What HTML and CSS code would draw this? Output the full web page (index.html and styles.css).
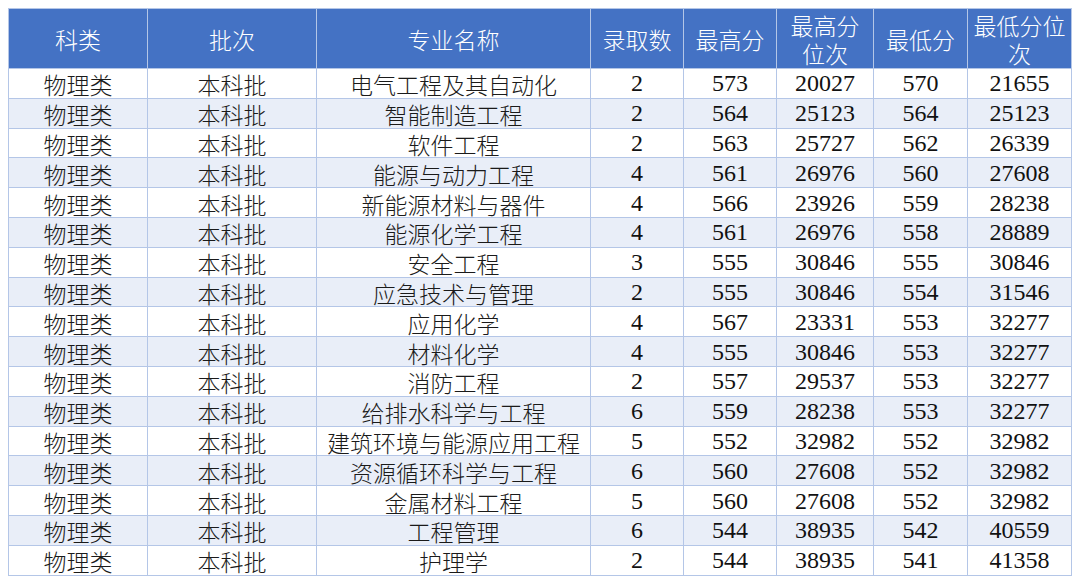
FILE: index.html
```html
<!DOCTYPE html>
<html lang="zh">
<head>
<meta charset="utf-8">
<link rel="stylesheet" href="styles.css">
</head>
<body>
<table class="score-table">
  <colgroup>
    <col class="c1"><col class="c2"><col class="c3"><col class="c4"><col class="c5"><col class="c6"><col class="c7"><col class="c8">
  </colgroup>
  <thead>
    <tr><th>科类</th><th>批次</th><th>专业名称</th><th>录取数</th><th>最高分</th><th>最高分位次</th><th>最低分</th><th>最低分位次</th></tr>
  </thead>
  <tbody>
    <tr><td>物理类</td><td>本科批</td><td>电气工程及其自动化</td><td class="num">2</td><td class="num">573</td><td class="num">20027</td><td class="num">570</td><td class="num">21655</td></tr>
    <tr><td>物理类</td><td>本科批</td><td>智能制造工程</td><td class="num">2</td><td class="num">564</td><td class="num">25123</td><td class="num">564</td><td class="num">25123</td></tr>
    <tr><td>物理类</td><td>本科批</td><td>软件工程</td><td class="num">2</td><td class="num">563</td><td class="num">25727</td><td class="num">562</td><td class="num">26339</td></tr>
    <tr><td>物理类</td><td>本科批</td><td>能源与动力工程</td><td class="num">4</td><td class="num">561</td><td class="num">26976</td><td class="num">560</td><td class="num">27608</td></tr>
    <tr><td>物理类</td><td>本科批</td><td>新能源材料与器件</td><td class="num">4</td><td class="num">566</td><td class="num">23926</td><td class="num">559</td><td class="num">28238</td></tr>
    <tr><td>物理类</td><td>本科批</td><td>能源化学工程</td><td class="num">4</td><td class="num">561</td><td class="num">26976</td><td class="num">558</td><td class="num">28889</td></tr>
    <tr><td>物理类</td><td>本科批</td><td>安全工程</td><td class="num">3</td><td class="num">555</td><td class="num">30846</td><td class="num">555</td><td class="num">30846</td></tr>
    <tr><td>物理类</td><td>本科批</td><td>应急技术与管理</td><td class="num">2</td><td class="num">555</td><td class="num">30846</td><td class="num">554</td><td class="num">31546</td></tr>
    <tr><td>物理类</td><td>本科批</td><td>应用化学</td><td class="num">4</td><td class="num">567</td><td class="num">23331</td><td class="num">553</td><td class="num">32277</td></tr>
    <tr><td>物理类</td><td>本科批</td><td>材料化学</td><td class="num">4</td><td class="num">555</td><td class="num">30846</td><td class="num">553</td><td class="num">32277</td></tr>
    <tr><td>物理类</td><td>本科批</td><td>消防工程</td><td class="num">2</td><td class="num">557</td><td class="num">29537</td><td class="num">553</td><td class="num">32277</td></tr>
    <tr><td>物理类</td><td>本科批</td><td>给排水科学与工程</td><td class="num">6</td><td class="num">559</td><td class="num">28238</td><td class="num">553</td><td class="num">32277</td></tr>
    <tr><td>物理类</td><td>本科批</td><td>建筑环境与能源应用工程</td><td class="num">5</td><td class="num">552</td><td class="num">32982</td><td class="num">552</td><td class="num">32982</td></tr>
    <tr><td>物理类</td><td>本科批</td><td>资源循环科学与工程</td><td class="num">6</td><td class="num">560</td><td class="num">27608</td><td class="num">552</td><td class="num">32982</td></tr>
    <tr><td>物理类</td><td>本科批</td><td>金属材料工程</td><td class="num">5</td><td class="num">560</td><td class="num">27608</td><td class="num">552</td><td class="num">32982</td></tr>
    <tr><td>物理类</td><td>本科批</td><td>工程管理</td><td class="num">6</td><td class="num">544</td><td class="num">38935</td><td class="num">542</td><td class="num">40559</td></tr>
    <tr><td>物理类</td><td>本科批</td><td>护理学</td><td class="num">2</td><td class="num">544</td><td class="num">38935</td><td class="num">541</td><td class="num">41358</td></tr>
  </tbody>
</table>
</body>
</html>
```

FILE: styles.css
```css
html, body {
  margin: 0;
  padding: 0;
  background: #ffffff;
}
body {
  padding: 8px;
}
.score-table {
  border-collapse: collapse;
  table-layout: fixed;
  width: 1063px;
  font-family: "Liberation Serif", "Noto Sans CJK SC", serif;
  font-size: 23px;
  color: #111111;
}
.c1 { width: 139px; }
.c2 { width: 169px; }
.c3 { width: 274px; }
.c4 { width: 93px; }
.c5 { width: 93px; }
.c6 { width: 97px; }
.c7 { width: 94px; }
.c8 { width: 104px; }

.score-table thead tr {
  height: 60px;
}
.score-table th {
  background: #4472c4;
  color: #ffffff;
  font-family: "Noto Sans CJK SC", sans-serif;
  font-weight: 300;
  font-size: 23px;
  line-height: 28px;
  padding: 0 4px;
  border: 1px solid #b4c6e7;
  text-align: center;
  vertical-align: middle;
}
.score-table tbody tr {
  height: 29.8px;
}
.score-table td {
  padding: 2px 2px 0;
  border: 1px solid #b4c6e7;
  text-align: center;
  vertical-align: middle;
  line-height: 26px;
  font-family: "Noto Sans CJK SC", sans-serif;
  font-weight: 300;
  color: #1a1a1a;
  white-space: nowrap;
}
.score-table td.num {
  font-family: "Liberation Serif", serif;
  font-weight: 400;
  font-size: 24px;
  padding-top: 0;
  color: #111111;
}
.score-table tbody tr:nth-child(even) td {
  background: #e9eef8;
}
```
